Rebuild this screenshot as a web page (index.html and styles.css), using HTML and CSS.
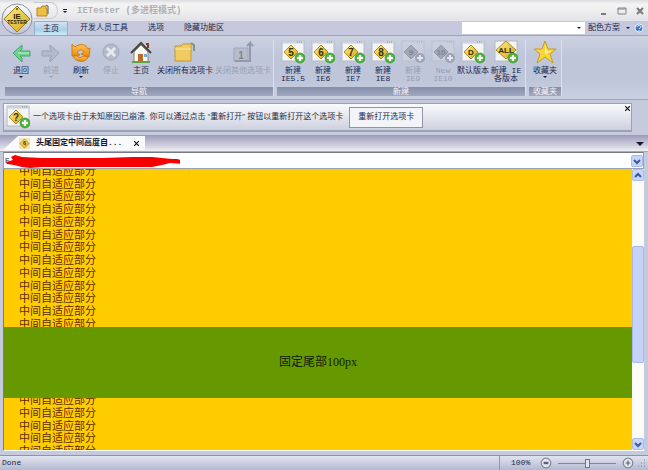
FILE: index.html
```html
<!DOCTYPE html>
<html lang="zh-CN">
<head>
<meta charset="utf-8">
<title>IETester</title>
<link rel="stylesheet" href="styles.css">
</head>
<body>
<svg class="defs" aria-hidden="true">
  <defs>
    <linearGradient id="gold" x1="0" y1="0" x2="1" y2="1"><stop offset="0" stop-color="#fbf08a"/><stop offset="1" stop-color="#d9a514"/></linearGradient>
    <linearGradient id="orange" x1="0" y1="0" x2="0" y2="1"><stop offset="0" stop-color="#ffc65c"/><stop offset="1" stop-color="#e8860c"/></linearGradient>
    <linearGradient id="silver" x1="0" y1="0" x2="0" y2="1"><stop offset="0" stop-color="#fff"/><stop offset="1" stop-color="#bfc4d6"/></linearGradient>
    <radialGradient id="plusfill"><stop offset="0" stop-color="#9be86b"/><stop offset="1" stop-color="#35a52b"/></radialGradient>
    <symbol id="page" viewBox="0 0 24 24">
      <rect x="1" y="1" width="22" height="20" fill="#f4f5f4" stroke="#b4bac6"/>
      <path d="M1 2h22" stroke="#ccd2dc" stroke-width="3"/>
      <path d="M16 2h5" stroke="#8d95a4" stroke-dasharray="1 1"/>
      <path d="M10 5l7 7-7 7-7-7z" fill="url(#gold)" stroke="#b08c1e"/>
    </symbol>
    <symbol id="plus" viewBox="0 0 24 24">
      <circle cx="19" cy="18" r="5" fill="url(#plusfill)" stroke="#3c9c34" stroke-width=".7"/>
      <path d="M19 15v6M16 18h6" stroke="#fff" stroke-width="2"/>
    </symbol>
    <symbol id="pageoff" viewBox="0 0 24 24">
      <rect x="1" y="1" width="22" height="20" fill="#c9cfdd" stroke="#b8bfd0"/>
      <path d="M16 2h5" stroke="#a4aaba" stroke-dasharray="1 1"/>
      <path d="M10 5l7 7-7 7-7-7z" fill="#a2a8b6" stroke="#9298a8"/>
      <circle cx="19" cy="18" r="5" fill="#9da3b2"/>
      <path d="M19 15v6M16 18h6" stroke="#e3e6ee" stroke-width="2"/>
    </symbol>
  </defs>
</svg>
<div class="window">
  <svg class="logo" viewBox="0 0 34 34" role="img" aria-label="IETester">
    <circle cx="17" cy="16" r="15" fill="url(#silver)" stroke="#8b91a8"/>
    <path d="M17 3l13 13-13 13L4 16z" fill="url(#gold)" stroke="#9a7c16" stroke-linejoin="round"/>
    <circle cx="17" cy="6" r="1" fill="#5a4a10"/>
    <text x="17" y="16" class="logo-a">IE</text>
    <text x="17" y="21" class="logo-b">TESTER</text>
  </svg>
  <header class="titlebar">
    <div class="quick">
      <button class="quick-open" aria-label="打开"><svg viewBox="0 0 14 14"><path d="M1 4h4l1-2h4v3h1v7H1z" fill="#edc043" stroke="#b58518"/><path d="M10 1l2 1v8" fill="none" stroke="#555"/></svg></button>
    </div>
    <button class="caret-btn" aria-label="自定义"><i class="bar"></i><i class="caret"></i></button>
    <h1>IETester (多进程模式)</h1>
    <div class="winbtns">
      <button aria-label="最小化"><svg viewBox="0 0 10 10"><path d="M2 8h5" stroke="#7c7c80" stroke-width="2"/></svg></button>
      <button aria-label="最大化"><svg viewBox="0 0 10 10"><path d="M1 2h8v6H1zM1 3h8" fill="none" stroke="#85858a"/></svg></button>
      <button aria-label="关闭"><svg viewBox="0 0 10 10"><path d="M2 2l6 6M8 2L2 8" stroke="#77777c" stroke-width="2"/></svg></button>
    </div>
  </header>
  <nav class="menu">
    <button class="menu-tab active">主页</button>
    <button class="menu-tab">开发人员工具</button>
    <button class="menu-tab">选项</button>
    <button class="menu-tab">隐藏功能区</button>
    <div class="menu-right">
      <div class="combo"><input type="text" aria-label="搜索"><button aria-label="展开"><i class="caret"></i></button></div>
      <button class="scheme">配色方案 <i class="caret"></i></button>
      <button class="help" aria-label="帮助"><svg viewBox="0 0 10 10"><circle cx="5" cy="5" r="4" fill="#3f74c4" stroke="#eaf0fb"/><path d="M3 4c0-2 4-2 4 0 0 1-2 1-2 2M5 7v1" fill="none" stroke="#fff"/></svg></button>
    </div>
  </nav>
  <section class="ribbon">
    <div class="group">
      <div class="tools">
        <button class="tool"><svg viewBox="0 0 24 24"><path d="M4 13l9-8v4l-2 2h10v5H11l2 2v4z" fill="#6fd08c" stroke="#3fa968"/><path d="M9 13h11" stroke="#c8f2d2"/></svg><span>退回</span><i class="caret"></i></button>
        <button class="tool off"><svg viewBox="0 0 24 24"><path d="M20 13l-9-8v4l2 2H3v5h10l-2 2v4z" fill="#b3bac9" stroke="#9ba3b4"/></svg><span>前进</span><i class="caret"></i></button>
        <button class="tool"><svg viewBox="0 0 24 24"><path d="M3 4l3 3c5-4 11-3 13 2l2-1-1 9-8-3 3-2c-2-3-5-2-7 0l3 3-8 1z" fill="url(#orange)" stroke="#cf7c10"/><path d="M4 16c3 7 13 7 15 1l-5-1c-2 2-4 2-6 0z" fill="url(#orange)" stroke="#cf7c10"/></svg><span>刷新</span><i class="caret"></i></button>
        <button class="tool off"><svg viewBox="0 0 24 24"><circle cx="12" cy="12" r="8" fill="#b4bac8" stroke="#a3aaba"/><path d="M8 8l8 8M16 8l-8 8" stroke="#e6e9f0" stroke-width="3"/></svg><span>停止</span></button>
        <button class="tool"><svg viewBox="0 0 24 24"><path d="M5 12v10h14V12l-7-7z" fill="#fbfaf2" stroke="#8a8878"/><path d="M2 13L12 3l10 10" fill="none" stroke="#4a4440" stroke-width="2"/><path d="M17 4h2v4" stroke="#8a3a28" stroke-width="2" fill="none"/><path d="M9 14h5v8H9z" fill="#bd6a2c"/><path d="M15 14h3v3h-3z" fill="#7ba7d8"/><path d="M3 22h18" stroke="#62a445" stroke-width="2"/></svg><span>主页</span></button>
        <button class="tool wide"><svg viewBox="0 0 24 24"><path d="M2 6h6l2-2h8v17H2z" fill="#efcb61" stroke="#c69630"/><path d="M2 9h16" stroke="#fae9a8"/><path d="M18 3l3 2v6" fill="none" stroke="#8d8a80" stroke-width="2"/></svg><span>关闭所有选项卡</span></button>
        <button class="tool wide off"><svg viewBox="0 0 24 24"><path d="M3 8h14v13H3z" fill="#b7bdcb" stroke="#a0a7b7"/><path d="M4 21h15V3l-3 3M19 3l3 3" fill="none" stroke="#9299aa" stroke-width="2"/><text x="10" y="19" class="num">1</text></svg><span>关闭其他选项卡</span></button>
      </div>
      <h2>导航</h2>
    </div>
    <div class="group">
      <div class="tools">
        <button class="tool"><svg viewBox="0 0 24 24"><use href="#page"/><text x="10" y="16" class="num">5</text><use href="#plus"/></svg><span>新建<br>IE5.5</span></button>
        <button class="tool"><svg viewBox="0 0 24 24"><use href="#page"/><text x="10" y="16" class="num">6</text><use href="#plus"/></svg><span>新建<br>IE6</span></button>
        <button class="tool"><svg viewBox="0 0 24 24"><use href="#page"/><text x="10" y="16" class="num">7</text><use href="#plus"/></svg><span>新建<br>IE7</span></button>
        <button class="tool"><svg viewBox="0 0 24 24"><use href="#page"/><text x="10" y="16" class="num">8</text><use href="#plus"/></svg><span>新建<br>IE8</span></button>
        <button class="tool off"><svg viewBox="0 0 24 24"><use href="#pageoff"/><text x="10" y="15" class="num small">9</text></svg><span>新建<br>IE9</span></button>
        <button class="tool off"><svg viewBox="0 0 24 24"><use href="#pageoff"/><text x="10" y="15" class="num small">10</text></svg><span>New<br>IE10</span></button>
        <button class="tool"><svg viewBox="0 0 24 24"><use href="#page"/><text x="10" y="15" class="num small">D</text><use href="#plus"/></svg><span>默认版本</span></button>
        <button class="tool all"><svg viewBox="0 0 24 24"><rect x="1" y="1" width="22" height="20" fill="#f4f5f4" stroke="#b4bac6"/><path d="M12 1l10 9-10 9-10-9z" fill="url(#gold)" stroke="#a98a1c"/><text x="12" y="13" class="num small">ALL</text><use href="#plus"/></svg><span>新建 IE<br>各版本</span></button>
      </div>
      <h2>新建</h2>
    </div>
    <div class="group">
      <div class="tools">
        <button class="tool fav"><svg viewBox="0 0 24 24"><path d="M12 1l3 8h8l-6 5 3 9-8-6-8 6 3-9-6-5h8z" fill="#f9d53c" stroke="#c89a26"/><path d="M12 5l2 6h5l-7 3z" fill="#fdf0a0"/></svg><span>收藏夹</span><i class="caret"></i></button>
      </div>
      <h2>收藏夹</h2>
    </div>
  </section>
  <section class="notice">
    <div class="notice-box">
      <svg class="notice-icon" viewBox="0 0 24 24"><use href="#page"/><text x="10" y="16" class="num">?</text><use href="#plus"/></svg>
      <p>一个选项卡由于未知原因已崩溃. 你可以通过点击 “重新打开” 按钮以重新打开这个选项卡</p>
      <button class="reopen">重新打开选项卡</button>
      <button class="dismiss" aria-label="关闭"><svg viewBox="0 0 6 6"><path d="M1 1l4 4M5 1L1 5" stroke="#111"/></svg></button>
    </div>
  </section>
  <div class="tabstrip">
    <div class="doc-tab">
      <svg viewBox="0 0 12 12"><rect width="12" height="12" fill="#f1e6b4"/><path d="M6 1l5 5-5 5-5-5z" fill="url(#gold)" stroke="#b99427"/><text x="6" y="8" class="num tiny">6</text></svg>
      <span>头尾固定中间高度自...</span>
      <button aria-label="关闭选项卡"><svg viewBox="0 0 6 6"><path d="M1 1l4 4M5 1L1 5" stroke="#111"/></svg></button>
    </div>
    <button class="tab-list" aria-label="选项卡列表"><i class="caret big"></i></button>
  </div>
  <div class="address">
    <input type="text" aria-label="地址" value="E">
    <button class="arrow" aria-label="展开"><svg viewBox="0 0 10 10"><path d="M2 4l3 3 3-3" fill="none" stroke="#3d5a96" stroke-width="2"/></svg></button>
    <svg class="scribble" viewBox="0 0 176 14"><path d="M2 8l7-2-2-3 4-2 7 2 20 1 60 0 30-1 20 0 10 1 10 1 5 0 7 2 1 2-3 1-12-1-8 2-10 2-110 0-12 1-8-1-8-2-7-1z" fill="#f60000"/></svg>
  </div>
  <main class="viewport">
    <div class="page">
      <div class="rows">
        <p>中间自适应部分</p><p>中间自适应部分</p><p>中间自适应部分</p><p>中间自适应部分</p>
        <p>中间自适应部分</p><p>中间自适应部分</p><p>中间自适应部分</p><p>中间自适应部分</p>
        <p>中间自适应部分</p><p>中间自适应部分</p><p>中间自适应部分</p><p>中间自适应部分</p>
        <p>中间自适应部分</p><p>中间自适应部分</p><p>中间自适应部分</p><p>中间自适应部分</p>
        <p>中间自适应部分</p><p>中间自适应部分</p><p>中间自适应部分</p><p>中间自适应部分</p>
        <p>中间自适应部分</p><p>中间自适应部分</p><p>中间自适应部分</p>
      </div>
      <footer class="fixed-foot">固定尾部100px</footer>
    </div>
    <div class="scrollbar">
      <button class="arrow" aria-label="向上"><svg viewBox="0 0 10 10"><path d="M2 7l3-3 3 3" fill="none" stroke="#3d5a96" stroke-width="2"/></svg></button>
      <div class="track"><div class="thumb"></div></div>
      <button class="arrow" aria-label="向下"><svg viewBox="0 0 10 10"><path d="M2 4l3 3 3-3" fill="none" stroke="#3d5a96" stroke-width="2"/></svg></button>
    </div>
  </main>
  <footer class="status">
    <span class="state">Done</span>
    <div class="zoom">
      <label for="zoom">100%</label>
      <button aria-label="缩小"><svg viewBox="0 0 10 10"><circle cx="5" cy="5" r="4" fill="#e4e6ee" stroke="#81869a"/><path d="M3 5h4" stroke="#5c6276" stroke-width="2"/></svg></button>
      <input id="zoom" type="range" min="0" max="200" value="100">
      <button aria-label="放大"><svg viewBox="0 0 10 10"><circle cx="5" cy="5" r="4" fill="#e4e6ee" stroke="#81869a"/><path d="M3 5h4M5 3v4" stroke="#5c6276" stroke-width="1"/></svg></button>
      <svg class="grip" viewBox="0 0 8 8"><path d="M6 1h1M6 4h1M3 4h1M6 7h1M3 7h1M0 7h1" stroke="#7d839c" stroke-width="1"/></svg>
    </div>
  </footer>
</div>
</body>
</html>
```
FILE: styles.css
```css
* { box-sizing: border-box; margin: 0; padding: 0; }
body { font: 8px/8px "Liberation Mono", "Noto Sans CJK SC", monospace; color: #20264c; background: #c5cadc; }
button, input { font: inherit; color: inherit; background: none; border: 0; }
button svg { display: block; }
.defs { position: absolute; width: 0; height: 0; }
.window { position: relative; display: flex; flex-direction: column; height: 100vh; overflow: hidden; }
.logo { position: absolute; left: 0; top: 3px; width: 34px; height: 34px; }
.logo text { text-anchor: middle; font-family: "Liberation Sans", sans-serif; font-weight: bold; fill: #2c2508; }
.logo-a { font-size: 8px; }
.logo-b { font-size: 5px; }
.caret { display: block; border: 2px solid transparent; border-top-color: #161a38; border-bottom: 0; width: 4px; height: 2px; }
.caret.big { border-width: 4px 4px 0; width: 8px; height: 4px; }

.titlebar { display: flex; align-items: center; flex: none; height: 21px; padding: 0 3px 0 34px; background: linear-gradient(#dcdde0, #f4f4f4 20%, #ececee 60%, #e2e3e8); }
.quick { display: flex; align-items: center; width: 24px; height: 17px; border: 1px solid #c9cbd3; border-left: 0; border-radius: 0 8px 8px 0; }
.quick-open { width: 14px; height: 14px; margin-left: 2px; }
.caret-btn { display: grid; gap: 1px; justify-items: center; width: 14px; }
.caret-btn .bar { width: 4px; height: 1px; background: #222; }
.titlebar h1 { flex: 1; padding-left: 5px; font-size: 9px; line-height: 12px; font-weight: bold; color: #b0b1b6; }
.winbtns { display: flex; gap: 8px; }
.winbtns button { width: 10px; height: 10px; }

.menu { display: flex; align-items: center; flex: none; height: 14px; padding-left: 34px; background: #c6c9dd; }
.menu-tab { height: 14px; padding: 0 10px; }
.menu-tab.active { width: 34px; margin-right: 2px; padding: 0; border: 1px solid #8fb1cf; border-bottom: 0; border-radius: 2px 2px 0 0; background: linear-gradient(#d4e2f0, #a9cfe8 60%, #cdeafa); }
.menu-right { display: flex; align-items: center; margin-left: auto; padding-right: 4px; }
.combo { display: flex; align-items: center; width: 123px; height: 12px; background: #fff; margin-right: 3px; }
.combo input { flex: 1; min-width: 0; outline: 0; }
.combo button { width: 8px; }
.scheme { display: flex; align-items: center; gap: 6px; }
.help { width: 10px; height: 10px; margin-left: 4px; }

.ribbon { display: flex; flex: none; gap: 3px; height: 65px; padding: 4px 4px 3px 5px; border: solid #9ca5c0; border-width: 1px 0; background: linear-gradient(#cdd2e2, #bfc6d9 30%, #bfc6d9 70%, #c8d0e2); }
.group { display: flex; flex-direction: column; justify-content: space-between; border-right: 1px solid #dce1ec; padding: 0 1px; }
.group h2 { height: 9px; margin: 0 -1px; font-size: 8px; line-height: 9px; font-weight: normal; text-align: center; color: #f4f6fb; background: linear-gradient(#858eaa, #a1a9c1); }
.tools { display: flex; align-items: flex-start; }
.tool { display: flex; flex-direction: column; align-items: center; width: 30px; white-space: nowrap; }
.tool svg { width: 24px; height: 24px; }
.tool span { padding-top: 3px; line-height: 8px; }
.tool .caret { margin-top: 1px; }
.tool.wide { width: 58px; }
.tool.all { width: 36px; }
.tool.off { color: #979eb2; }
.tool.off .caret { border-top-color: #979eb2; }
.num { font: bold 10px "Liberation Sans", sans-serif; text-anchor: middle; fill: #35300c; }
.off .num { fill: #7f8597; }
.num.small { font-size: 8px; }
.num.tiny { font-size: 6px; }

.notice { flex: none; height: 35px; padding: 3px 16px 3px 3px; background: #c5cadc; }
.notice-box { display: flex; align-items: center; height: 29px; border: 1px solid #9aa1b6; border-bottom-width: 2px; background: linear-gradient(#fafbfd, #cdd1de); }
.notice-icon { width: 24px; height: 24px; margin: 0 3px 0 2px; }
.notice p { font-family: "Liberation Sans", "Noto Sans CJK SC", sans-serif; white-space: nowrap; color: #262a40; }
.reopen { width: 74px; height: 21px; margin-left: 6px; border: 1px solid #8f94a8; background: #f3f4f7; }
.dismiss { width: 7px; height: 7px; margin: 1px 0 0 auto; align-self: flex-start; }

.tabstrip { display: flex; align-items: flex-end; flex: none; height: 17px; padding: 0 4px 1px 3px; border-bottom: 1px solid #a9acb8; background: linear-gradient(#9c9ab9, #dcdbe6 80%, #f2f2f5); }
.doc-tab { display: flex; align-items: center; width: 142px; height: 14px; padding: 0 5px 0 16px; font-weight: bold; color: #10142c; background: #fafafc; clip-path: polygon(15px 0, 100% 0, 100% 100%, 0 100%); }
.doc-tab > svg { width: 11px; height: 11px; margin-right: 6px; }
.doc-tab button { width: 7px; height: 7px; margin-left: auto; }
.tab-list { margin: 0 0 4px auto; }

.address { position: relative; display: flex; align-items: center; flex: none; height: 17px; margin: 0 4px 0 3px; background: #fff; border: 1px solid #9aa0ae; border-top-color: #777b88; }
.address input { flex: 1; padding-left: 1px; outline: 0; }
.arrow { width: 12px; height: 12px; flex: none; border: 1px solid #a9bdec; border-radius: 2px; background: #c6d5fb; }
.scribble { position: absolute; left: 0; top: 1px; width: 176px; height: 14px; }

.viewport { display: flex; flex: 1; min-height: 0; margin: 0 4px 0 3px; border-left: 1px solid #777b88; border-bottom: 1px solid #fff; }
.page { position: relative; flex: 1; display: flex; overflow: hidden; background: #fc0; }
.rows { display: flex; flex-direction: column; margin: -3px 0 -9px 15px; font-size: 11px; line-height: 13px; color: #5e2d00; }
.rows p { flex: 1 1 0; min-height: 0; }
.fixed-foot { position: absolute; left: 0; right: 0; bottom: 52px; height: 71px; font: 12px/71px "Liberation Serif", "Noto Sans CJK SC", serif; text-align: center; color: #101c00; background: #690; }
.scrollbar { display: flex; flex-direction: column; flex: none; width: 12px; background: #fbfbf8; }
.track { flex: 1; display: grid; grid-template-rows: 25fr 45fr 29fr; }
.thumb { grid-row: 2; border: 1px solid #a9b9ea; border-radius: 2px; background: #c5d2fa; }

.status { display: flex; flex: none; height: 15px; margin-top: 4px; border-top: 1px solid #8d95ad; background: linear-gradient(#e1e4f0, #b4b9d0); }
.state { padding: 3px 2px; }
.zoom { display: flex; align-items: center; width: 149px; margin-left: auto; padding-left: 11px; border-left: 1px solid #9097b2; }
.zoom button { width: 12px; height: 12px; }
.zoom label { width: 29px; }
.zoom input { flex: 1; min-width: 0; height: 10px; margin: 0 6px; appearance: none; background: linear-gradient(#7d849e, #7d849e) center / 100% 1px no-repeat; }
.zoom input::-webkit-slider-thumb { appearance: none; width: 5px; height: 9px; border: 1px solid #6e758f; background: #e3e6ef; }
.grip { width: 8px; height: 8px; margin: 0 2px 0 4px; }
```
